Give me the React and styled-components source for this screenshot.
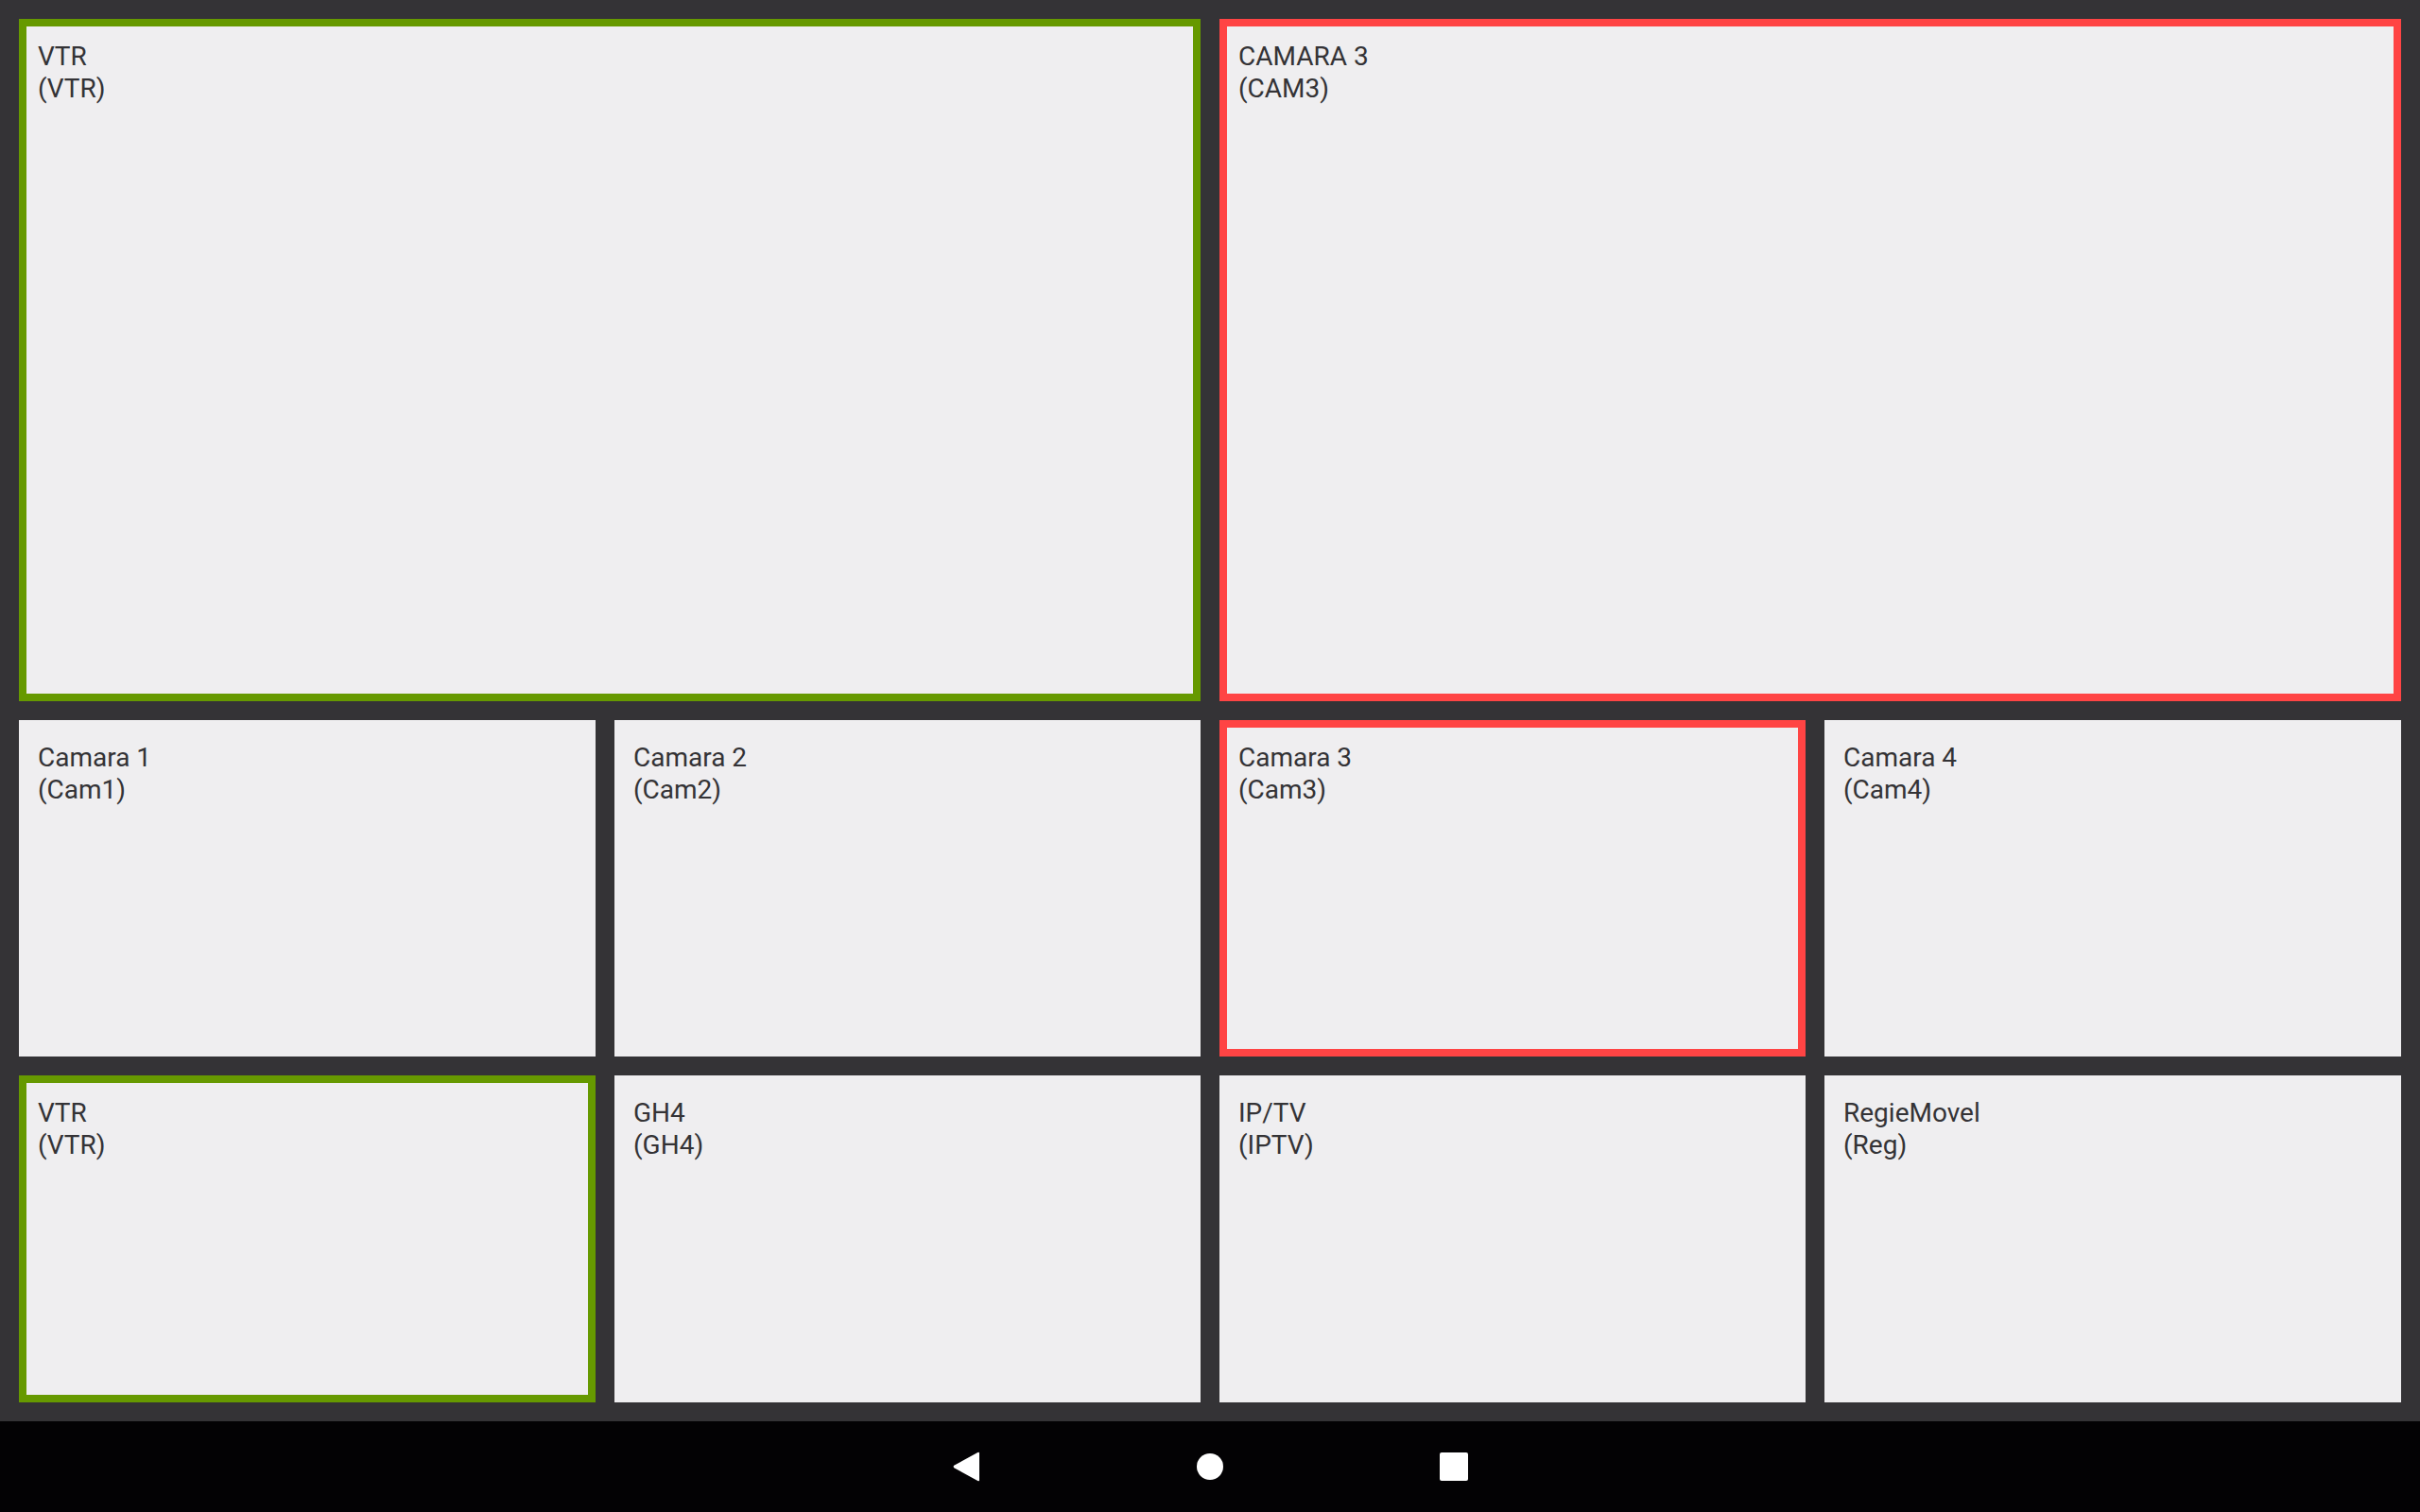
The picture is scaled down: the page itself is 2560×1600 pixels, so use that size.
import React from "react";
import styled, { createGlobalStyle } from "styled-components";

const Global = createGlobalStyle`
  html, body { margin: 0; padding: 0; background: #030204; }
  #root { width: 2560px; height: 1600px; }
`;

const Screen = styled.div`
  width: 2560px;
  height: 1600px;
  display: flex;
  flex-direction: column;
  font-family: Roboto, "Noto Sans", sans-serif;
`;

const Multiview = styled.div`
  flex: 1;
  background: #343336;
  padding: 20px;
  box-sizing: border-box;
  display: grid;
  grid-template-columns: 610px 620px 620px 610px;
  grid-template-rows: 722px 356px 346px;
  gap: 20px;
`;

const borderColors = {
  program: "#669900",
  preview: "#ff4444",
  none: "#efeef0",
};

const Tile = styled.div`
  box-sizing: border-box;
  grid-column: span ${(p) => p.$span || 1};
  background: #efeef0;
  border: 8px solid ${(p) => borderColors[p.$state || "none"]};
  padding: 15px 12px;
  color: #343336;
  font-size: 28px;
  line-height: 34px;
`;

const Line = styled.div`
  white-space: nowrap;
`;

const NavBar = styled.div`
  height: 96px;
  flex-shrink: 0;
  background: #030204;
  display: flex;
  align-items: center;
  justify-content: center;
  gap: 58px;
`;

const NavButton = styled.div`
  width: 200px;
  height: 96px;
  display: flex;
  align-items: center;
  justify-content: center;
`;

const tiles = [
  { name: "VTR", code: "VTR", span: 2, state: "program" },
  { name: "CAMARA 3", code: "CAM3", span: 2, state: "preview" },
  { name: "Camara 1", code: "Cam1" },
  { name: "Camara 2", code: "Cam2" },
  { name: "Camara 3", code: "Cam3", state: "preview" },
  { name: "Camara 4", code: "Cam4" },
  { name: "VTR", code: "VTR", state: "program" },
  { name: "GH4", code: "GH4" },
  { name: "IP/TV", code: "IPTV" },
  { name: "RegieMovel", code: "Reg" },
];

export default function App() {
  return (
    <>
      <Global />
      <Screen>
        <Multiview>
          {tiles.map((t, i) => (
            <Tile key={i} $span={t.span} $state={t.state}>
              <Line>{t.name}</Line>
              <Line>({t.code})</Line>
            </Tile>
          ))}
        </Multiview>
        <NavBar>
          <NavButton>
            <svg width="29" height="32" viewBox="0 0 29 32">
              <path d="M28 1.8 L28 30.2 Q28 32 26.3 31 L1.2 17.2 Q0 16 1.2 14.8 L26.3 1 Q28 0 28 1.8 Z" fill="#fff" />
            </svg>
          </NavButton>
          <NavButton>
            <svg width="28" height="28" viewBox="0 0 28 28">
              <circle cx="14" cy="14" r="14" fill="#fff" />
            </svg>
          </NavButton>
          <NavButton>
            <svg width="30" height="30" viewBox="0 0 30 30">
              <rect x="0" y="0" width="30" height="30" rx="2" fill="#fff" />
            </svg>
          </NavButton>
        </NavBar>
      </Screen>
    </>
  );
}
